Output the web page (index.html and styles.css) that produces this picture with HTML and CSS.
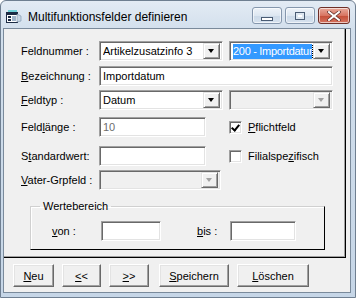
FILE: index.html
```html
<!DOCTYPE html>
<html lang="de">
<head>
    <meta charset="UTF-8">
    <title>Multifunktionsfelder definieren</title>
    <link rel="stylesheet" href="styles.css">
</head>
<body>
    <div class="window">
        <div class="titlebar">
            <svg class="appicon" width="16" height="16" viewBox="0 0 16 16">
                <rect x="0.5" y="3.5" width="11" height="10" fill="#fff" stroke="#1c2b44"/>
                <rect x="1" y="4" width="10" height="2" fill="#1c2b44"/>
                <rect x="2" y="7" width="3" height="2" fill="#1c2b44"/>
                <rect x="2" y="10" width="3" height="2" fill="#1c2b44"/>
                <rect x="6" y="7" width="4" height="5" fill="#9fb3c8"/>
                <path d="M11 5 L15 7 L15 12 L11 13 Z" fill="#c8d6e4" stroke="#7890a8" stroke-width="0.6"/>
                <rect x="2" y="1" width="9" height="2" fill="#6fd0d8"/>
            </svg>
            <span class="title">Multifunktionsfelder definieren</span>
            <div class="capbtns">
                <div class="capbtn"><span class="minglyph"></span></div>
                <div class="capbtn"><span class="maxglyph"></span></div>
                <div class="capbtn close">
                    <svg width="14" height="10" viewBox="0 0 14 10">
                        <path d="M2 1 L12 9 M12 1 L2 9" stroke="#5a2a24" stroke-width="3.4" stroke-linecap="square"/>
                        <path d="M2 1 L12 9 M12 1 L2 9" stroke="#fff" stroke-width="2" stroke-linecap="square"/>
                    </svg>
                </div>
            </div>
        </div>
        <div class="client">
            <div class="panel">
                <div class="row r1">
                    <label class="lbl">Feldnummer :</label>
                    <div class="field combo w124"><span class="text">Artikelzusatzinfo 3</span><span class="arrow"></span></div>
                    <div class="field combo w104 focused"><span class="text"><span class="sel">200 - Importdatum</span></span><span class="arrow"></span></div>
                </div>
                <div class="row r2">
                    <label class="lbl"><u>B</u>ezeichnung :</label>
                    <div class="field w234"><span class="text">Importdatum</span></div>
                </div>
                <div class="row r3">
                    <label class="lbl"><u>F</u>eldtyp :</label>
                    <div class="field combo w124"><span class="text">Datum</span><span class="arrow"></span></div>
                    <div class="field combo w104 disabled"><span class="text"></span><span class="arrow"></span></div>
                </div>
                <div class="row r4">
                    <label class="lbl">Feld<u>l</u>änge :</label>
                    <div class="field w107 grey"><span class="text">10</span></div>
                    <div class="check checked"><span class="box"></span><u>P</u>flichtfeld</div>
                </div>
                <div class="row r5">
                    <label class="lbl">S<u>t</u>andardwert:</label>
                    <div class="field w107"><span class="text"></span></div>
                    <div class="check"><span class="box"></span>Filialspe<u>z</u>ifisch</div>
                </div>
                <div class="row r6">
                    <label class="lbl"><u>V</u>ater-Grpfeld :</label>
                    <div class="field combo w122 disabled"><span class="text"></span><span class="arrow"></span></div>
                </div>
                <fieldset class="group">
                    <legend>Wertebereich</legend>
                    <label class="lbl-von"><u>v</u>on :</label>
                    <div class="field w60"><span class="text"></span></div>
                    <label class="lbl-bis"><u>b</u>is :</label>
                    <div class="field w66"><span class="text"></span></div>
                </fieldset>
            </div>
            <div class="buttons">
                <div class="btn b-neu"><u>N</u>eu</div>
                <div class="btn b-prev"><u>&lt;</u>&lt;</div>
                <div class="btn b-next"><u>&gt;</u>&gt;</div>
                <div class="btn b-save"><u>S</u>peichern</div>
                <div class="btn b-del"><u>L</u>öschen</div>
            </div>
        </div>
    </div>
</body>
</html>
```

FILE: styles.css
```css
* { box-sizing: border-box; }
body { margin: 0; background: #fff; font-family: "Liberation Sans", Arial, sans-serif; font-size: 11px; color: #000; }

.window {
    width: 356px;
    height: 298px;
    background: linear-gradient(#e3ebf4, #d2dfec 30px, #c6d6e7);
    border: 1px solid #6f7f91;
    border-radius: 6px 6px 0 0;
    padding: 0 4px 4px 2px;
    display: flex;
    flex-direction: column;
}

.titlebar { height: 27px; display: flex; align-items: center; padding-left: 3px; }
.appicon { margin-top: 4px; }
.title { margin-left: 6px; margin-top: 4px; font-size: 12px; color: #000; }
.capbtns { margin-left: auto; display: flex; gap: 3px; align-self: flex-start; margin-top: 6px; margin-right: 1px; }
.capbtn {
    width: 30px;
    height: 17px;
    border: 1px solid #8597ad;
    border-radius: 3px;
    background: linear-gradient(#eef3f9, #dde7f1 50%, #cbd9e8 51%, #d6e2ee);
    box-shadow: inset 0 0 0 1px rgba(255,255,255,0.6);
    display: flex;
    align-items: center;
    justify-content: center;
}
.capbtn.close { width: 32px; border-color: #6e2f28; background: linear-gradient(#e8aa9c, #d87562 50%, #c54d37 51%, #d4735f); }
.minglyph { width: 12px; height: 4px; border: 1px solid #4a5c74; background: #fff; margin-top: 6px; }
.maxglyph { width: 10px; height: 8px; border: 1px solid #4a5c74; background: #fff; box-shadow: inset 0 0 0 2px #dde7f1; }

.client {
    flex: 1;
    background: #f0f0f0;
    border: 1px solid #7a8a9b;
    display: flex;
    flex-direction: column;
}

.panel {
    width: 342px;
    height: 229px;
    border-right: 1px solid #000;
    border-bottom: 1px solid #000;
    box-shadow: inset -1px -1px #a0a0a0;
    padding: 12px 0 0 17px;
}

.row { display: flex; align-items: center; height: 20px; }
.r2 { margin-top: 5px; }
.r3 { margin-top: 4px; }
.r4 { margin-top: 7px; }
.r5 { margin-top: 9px; }
.r6 { margin-top: 4px; }
.lbl { width: 78px; }

.field {
    height: 20px;
    background: #fff;
    border: 1px solid;
    border-color: #a0a0a0 #fff #fff #a0a0a0;
    box-shadow: inset 1px 1px #696969, inset -1px -1px #e3e3e3;
    display: flex;
    align-items: center;
    padding: 0 2px 0 3px;
}
.field .text { flex: 1; white-space: nowrap; overflow: hidden; }
.field.grey { color: #6d6d6d; }
.combo { margin-right: 6px; padding-right: 2px; }
.w124 { width: 124px; }
.w104 { width: 104px; }
.w234 { width: 234px; }
.w107 { width: 107px; }
.w122 { width: 122px; }
.w60 { width: 60px; }
.w66 { width: 66px; }

.arrow {
    width: 17px;
    height: 16px;
    flex: none;
    background: #f0f0f0;
    border: 1px solid;
    border-color: #e3e3e3 #696969 #696969 #e3e3e3;
    box-shadow: inset 1px 1px #fff, inset -1px -1px #a0a0a0;
    position: relative;
}
.arrow::after {
    content: "";
    position: absolute;
    left: 4px;
    top: 5px;
    border-left: 3.5px solid transparent;
    border-right: 3.5px solid transparent;
    border-top: 4px solid #000;
}
.disabled .arrow::after { border-top-color: #a0a0a0; }
.disabled { background: #f0f0f0; }

.focused .text { padding-right: 1px; }
.sel {
    display: block;
    background: #3399ff;
    color: #fff;
    outline: 1px dotted #000;
    padding: 1px 0 1px 1px;
    margin-left: -1px;
    line-height: 13px;
    overflow: hidden;
    letter-spacing: -0.3px;
}

.check { margin-left: 23px; display: flex; align-items: center; }
.check .box {
    width: 13px;
    height: 13px;
    margin-right: 6px;
    background: #fff;
    border: 1px solid;
    border-color: #a0a0a0 #fff #fff #a0a0a0;
    box-shadow: inset 1px 1px #696969, inset -1px -1px #e3e3e3;
    position: relative;
}
.checked .box::after {
    content: "";
    position: absolute;
    left: 3px;
    top: 1px;
    width: 3px;
    height: 6px;
    border-right: 2px solid #000;
    border-bottom: 2px solid #000;
    transform: rotate(40deg);
}

.group {
    margin: 10px 0 0 9px;
    width: 295px;
    height: 50px;
    border: 1px solid;
    border-color: #d0d0d0 #000 #000 #d0d0d0;
    box-shadow: inset 1px 1px #fff;
    padding: 0 0 0 21px;
    display: flex;
    align-items: center;
}
.group legend { padding: 0 3px; margin-left: -12px; }
.lbl-von { width: 49px; }
.lbl-bis { margin-left: 36px; width: 33px; }

.buttons { display: flex; padding: 6px 0 0 9px; gap: 8px; }
.btn {
    height: 23px;
    background: #f0f0f0;
    border: 1px solid;
    border-color: #fff #696969 #696969 #fff;
    box-shadow: inset -1px -1px #a0a0a0, inset 1px 1px #e3e3e3;
    display: flex;
    align-items: center;
    justify-content: center;
}
.b-neu { width: 41px; }
.b-prev { width: 39px; }
.b-next { width: 40px; }
.b-save { width: 70px; margin-left: 2px; }
.b-del { width: 72px; }
```
